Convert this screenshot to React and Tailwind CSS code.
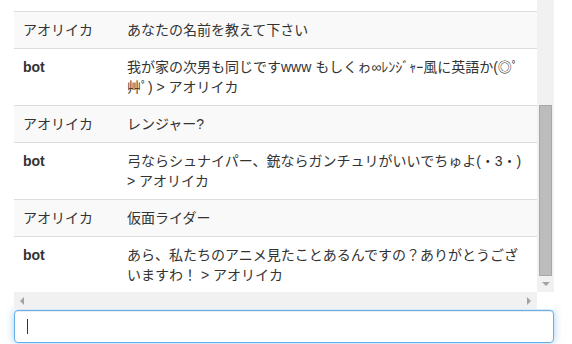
const rows = [
  { name: 'アオリイカ', lines: ['あなたの名前を教えて下さい'], striped: true },
  {
    name: 'bot',
    lines: ['我が家の次男も同じですwww もしくゎ∞ﾚﾝｼﾞｬｰ風に英語か(◎ﾟ', '艸ﾟ) > アオリイカ'],
    bold: true,
  },
  { name: 'アオリイカ', lines: ['レンジャー?'], striped: true },
  {
    name: 'bot',
    lines: ['弓ならシュナイパー、銃ならガンチュリがいいでちゅよ(・3・)', '> アオリイカ'],
    bold: true,
  },
  { name: 'アオリイカ', lines: ['仮面ライダー'], striped: true },
  {
    name: 'bot',
    lines: ['あら、私たちのアニメ見たことあるんですの？ありがとうござ', 'いますわ！ > アオリイカ'],
    bold: true,
  },
]

function Arrow({ dir }) {
  const pts = {
    down: '0,0 8,0 4,4',
    left: '4,0 4,8 0,4',
    right: '0,0 0,8 4,4',
  }[dir]
  const size = dir === 'down' ? { w: 8, h: 4 } : { w: 4, h: 8 }
  return (
    <svg width={size.w} height={size.h} viewBox={`0 0 ${size.w} ${size.h}`}>
      <polygon points={pts} fill="#a3a3a3" />
    </svg>
  )
}

export default function App() {
  return (
    <div
      className="h-[344px] w-[572px] overflow-hidden bg-white text-[14px] leading-[20px] text-[#333]"
      style={{ fontFamily: '"Liberation Sans", "Noto Sans CJK JP", sans-serif' }}
    >
      <div className="ml-[14px] w-[540px]">
        <div className="flex h-[292px]">
          <div className="w-[523px] overflow-hidden">
            <div className="h-[11px] bg-white" />
            {rows.map((row, i) => (
              <div
                key={i}
                className={`flex border-t border-[#ddd] ${row.striped ? 'bg-[#f9f9f9]' : 'bg-white'}`}
              >
                <div className={`w-[105px] shrink-0 p-2 pl-[9px] ${row.bold ? 'font-bold' : ''}`}>
                  {row.name}
                </div>
                <div className="flex-1 p-2 whitespace-nowrap">
                  {row.lines.map((line, j) => (
                    <div key={j}>{line}</div>
                  ))}
                </div>
              </div>
            ))}
          </div>
          <div className="flex w-[17px] flex-col bg-[#f1f1f1]">
            <div className="h-[105px]" />
            <div className="mx-[2px] h-[171px] border border-[#a8a8a8] bg-[#bcbcbc]" />
            <div className="flex flex-1 items-center justify-center">
              <Arrow dir="down" />
            </div>
          </div>
        </div>
        <div className="flex h-[17px]">
          <div className="flex w-[523px] items-center justify-between bg-[#f1f1f1] px-[6px]">
            <Arrow dir="left" />
            <Arrow dir="right" />
          </div>
          <div className="w-[17px] bg-white" />
        </div>
        <div className="mt-[1px] flex h-[33px] items-center rounded-[4px] border border-[#66afe9] bg-white pl-[12px] shadow-[inset_0_1px_1px_rgba(0,0,0,0.075),0_0_8px_rgba(102,175,233,0.6)]">
          <div className="h-[15px] w-px bg-[#333]" />
        </div>
      </div>
    </div>
  )
}
